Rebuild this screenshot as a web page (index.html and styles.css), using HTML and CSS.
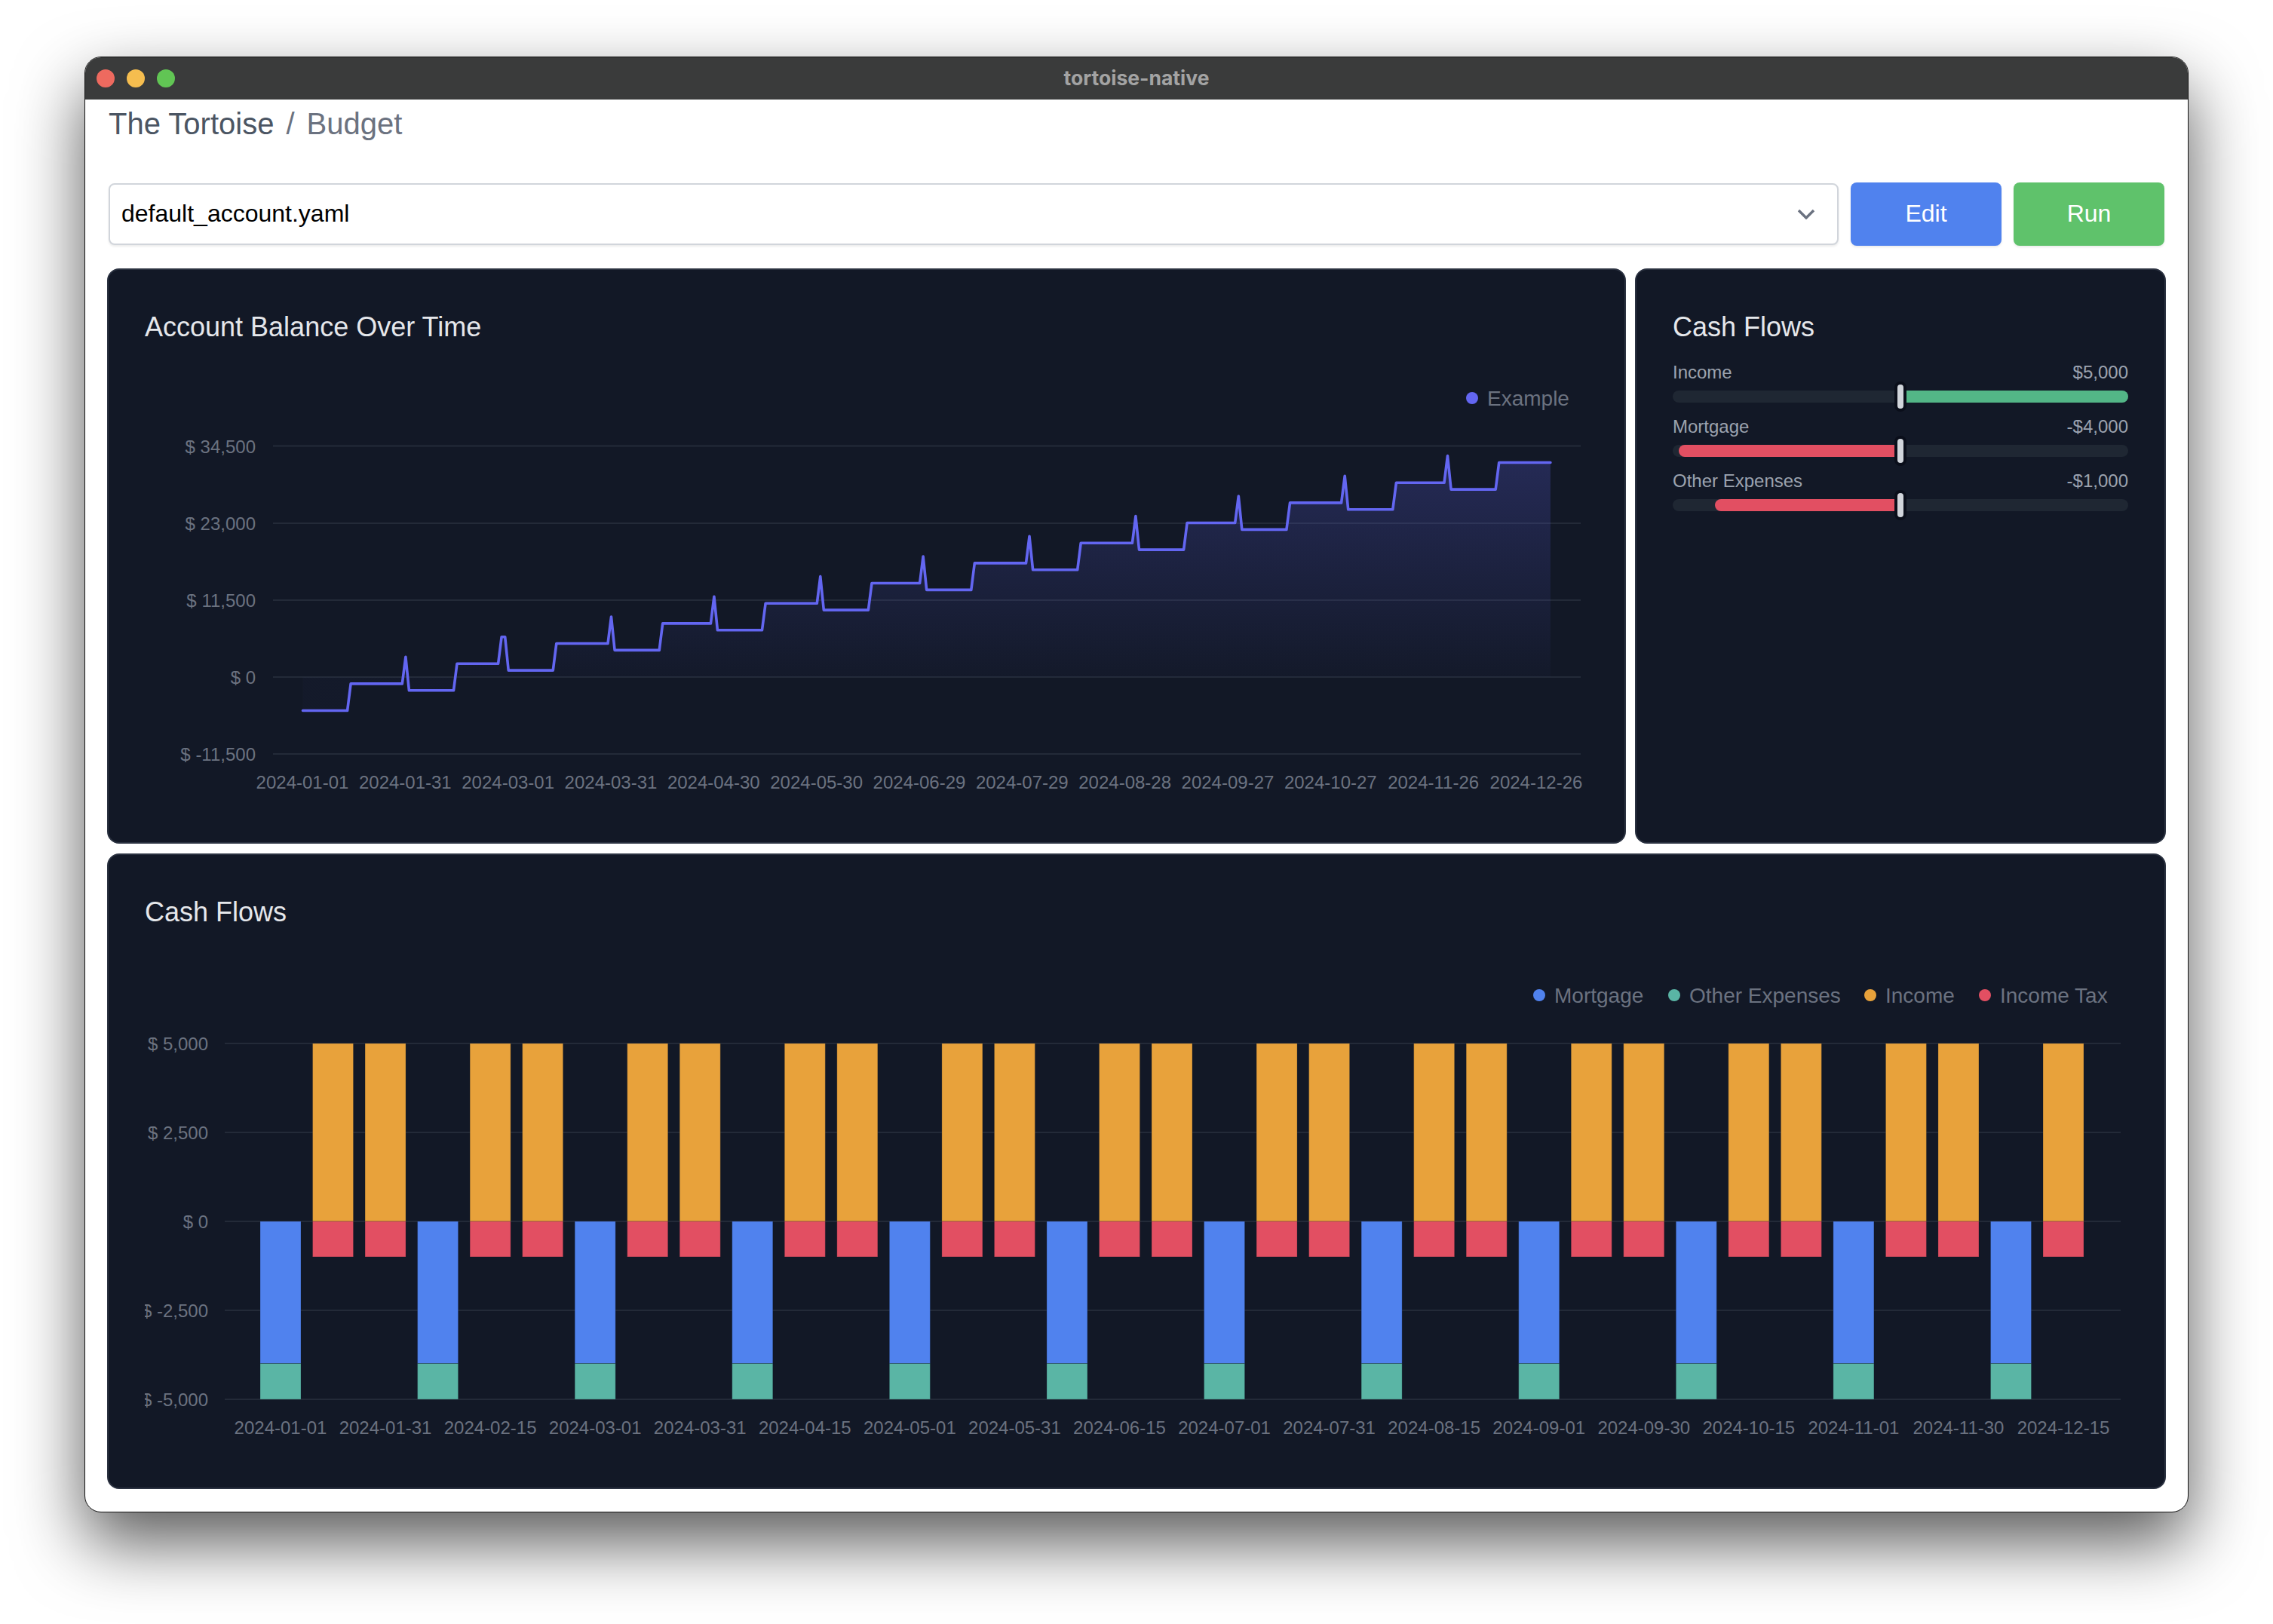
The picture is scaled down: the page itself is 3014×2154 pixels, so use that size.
FILE: index.html
```html
<!DOCTYPE html>
<html lang="en">

<head>
    <meta charset="UTF-8">
    <title>tortoise-native</title>
    <link rel="stylesheet" href="styles.css">
</head>

<body>
    <div class="window">
        <div class="titlebar">
            <div class="lights">
                <span class="light red"></span>
                <span class="light yellow"></span>
                <span class="light green"></span>
            </div>
            <div class="window-title">tortoise-native</div>
        </div>

        <main class="content">
            <nav class="breadcrumb">
                <span class="crumb-root">The Tortoise</span>
                <span class="crumb-sep">/</span>
                <span class="crumb-page">Budget</span>
            </nav>

            <div class="toolbar">
                <div class="select">
                    <span>default_account.yaml</span>
                    <svg class="chevron" viewBox="0 0 24 14" width="24" height="14">
                        <path d="M2 2 L12 12 L22 2" />
                    </svg>
                </div>
                <button class="btn btn-edit">Edit</button>
                <button class="btn btn-run">Run</button>
            </div>

            <div class="top-row">
                <section class="card">
                    <h2 class="card-title">Account Balance Over Time</h2>
                    <svg id="balanceChart" class="chart" viewBox="192 460 1914 609" width="1914" height="609"></svg>
                </section>

                <section class="card">
                    <h2 class="card-title">Cash Flows</h2>
                    <div class="flows">
                        <div class="flow">
                            <div class="flow-labels"><span>Income</span><span>$5,000</span></div>
                            <div class="track">
                                <div class="fill fill-pos" style="left: 51.3%; right: 0"></div>
                                <div class="handle"></div>
                            </div>
                        </div>
                        <div class="flow">
                            <div class="flow-labels"><span>Mortgage</span><span>-$4,000</span></div>
                            <div class="track">
                                <div class="fill fill-neg" style="left: 1.3%; right: 51.2%"></div>
                                <div class="handle"></div>
                            </div>
                        </div>
                        <div class="flow">
                            <div class="flow-labels"><span>Other Expenses</span><span>-$1,000</span></div>
                            <div class="track">
                                <div class="fill fill-neg" style="left: 9.3%; right: 51.2%"></div>
                                <div class="handle"></div>
                            </div>
                        </div>
                    </div>
                </section>
            </div>

            <section class="card card-wide">
                <h2 class="card-title">Cash Flows</h2>
                <svg id="flowsChart" class="chart" viewBox="192 1236 2630 689" width="2630" height="689"></svg>
            </section>
        </main>
    </div>

    <script src="script.js"></script>
</body>

</html>
```

FILE: styles.css
```css
* {
    box-sizing: border-box;
}

html,
body {
    margin: 0;
    height: 2154px;
    overflow: hidden;
}

body {
    font-family: 'Liberation Sans', Arial, sans-serif;
    background-color: #fff;
    padding: 75px 112px 0;
}

.window {
    width: 2790px;
    height: 1931px;
    background: #fff;
    border: 1px solid #111;
    border-radius: 22px;
    box-shadow: 0 40px 90px rgba(0, 0, 0, 0.65);
    overflow: hidden;
}

.titlebar {
    position: relative;
    height: 56px;
    padding-bottom: 2px;
    background-color: #3a3b3b;
    display: flex;
    align-items: center;
    justify-content: center;
}

.lights {
    position: absolute;
    left: 15px;
    top: 16px;
    display: flex;
    gap: 16px;
}

.light {
    width: 24px;
    height: 24px;
    border-radius: 50%;
}

.light.red {
    background-color: #ee6a5f;
}

.light.yellow {
    background-color: #f5bd4f;
}

.light.green {
    background-color: #61c554;
}

.window-title {
    font-family: Inter, sans-serif;
    font-weight: 700;
    font-size: 26.5px;
    color: #a3a3a3;
}

.content {
    padding: 1px 29px 30px;
}

.breadcrumb {
    margin: 0 2px;
    height: 60px;
    line-height: 62px;
    font-size: 40px;
    display: flex;
    gap: 16px;
    color: #6b7280;
}

.crumb-root {
    color: #4b5563;
}

.toolbar {
    margin: 49px 2px 30px;
    height: 84px;
    display: flex;
    gap: 16px;
    align-items: center;
}

.select {
    flex: 1;
    height: 82px;
    padding: 0 16px 2px 15px;
    background: #fff;
    border: 2px solid #d1d5db;
    border-radius: 8px;
    box-shadow: 0 2px 3px rgba(0, 0, 0, 0.08);
    font-size: 32px;
    color: #000;
    display: flex;
    align-items: center;
    justify-content: space-between;
}

.chevron {
    margin: 2px 13px 0 0;
}

.chevron path {
    fill: none;
    stroke: #6b7280;
    stroke-width: 3.4;
}

.btn {
    width: 200px;
    height: 84px;
    padding: 0 0 2px;
    border: none;
    border-radius: 8px;
    color: #fff;
    font-family: inherit;
    font-size: 32px;
    box-shadow: 0 2px 3px rgba(0, 0, 0, 0.08);
}

.btn-edit {
    background-color: #5082ee;
}

.btn-run {
    background-color: #5fc26b;
}

.top-row {
    display: grid;
    grid-template-columns: 1fr 704px;
    gap: 12px;
    height: 763px;
}

.card {
    background-color: #121826;
    border: 2px solid #2a3140;
    border-radius: 16px;
    padding: 48px;
    overflow: hidden;
}

.card-wide {
    margin-top: 13px;
    height: 843px;
}

.card-title {
    margin: 0;
    height: 54px;
    line-height: 56px;
    font-size: 36px;
    font-weight: 400;
    color: #e5e7eb;
}

.chart {
    display: block;
    font-size: 24px;
}

.chart text {
    fill: #6b7280;
}

.chart .legend {
    font-size: 28px;
}

.chart .grid {
    stroke: #232a38;
    stroke-width: 2;
}

.chart .balance-line {
    fill: none;
    stroke: #6366f1;
    stroke-width: 3.6;
    stroke-linejoin: round;
    stroke-linecap: round;
}

.chart .bar {
    stroke: #111827;
    stroke-opacity: 0.25;
    stroke-width: 1;
}

.flows {
    margin-top: 14px;
}

.flow {
    height: 72px;
}

.flow-labels {
    height: 40px;
    line-height: 40px;
    font-size: 24px;
    color: #9ca3af;
    display: flex;
    justify-content: space-between;
}

.track {
    position: relative;
    margin-top: 4px;
    height: 16px;
    border-radius: 8px;
    background-color: #1f2733;
}

.fill {
    position: absolute;
    top: 0;
    bottom: 0;
}

.fill-pos {
    background-color: #53b687;
    border-radius: 0 8px 8px 0;
}

.fill-neg {
    background-color: #e24f62;
    border-radius: 8px 0 0 8px;
}

.handle {
    position: absolute;
    left: 298px;
    top: -8px;
    width: 8px;
    height: 32px;
    border-radius: 4px;
    background-color: #d1d5db;
    box-shadow: 0 0 0 4px #0a0e1a;
}
```

FILE: script.js
```js
const NS = 'http://www.w3.org/2000/svg';

function add(svg, tag, attrs, text) {
    const el = document.createElementNS(NS, tag);
    for (const k in attrs) {
        el.setAttribute(k, attrs[k]);
    }
    if (text) {
        el.textContent = text;
    }
    svg.appendChild(el);
    return el;
}

function legend(svg, items, y) {
    items.forEach(item => {
        add(svg, 'circle', { cx: item.x, cy: y, r: 8, fill: item.color });
        add(svg, 'text', { x: item.x + 20, y: y, dy: '0.35em', class: 'legend' }, item.name);
    });
}

function drawBalance() {
    const svg = document.getElementById('balanceChart');
    const zero = 898;
    const yOf = v => zero - v * 0.00889;
    const xOf = day => 401.5 + 4.545 * day;

    const ticks = [
        ['$ 34,500', 591.5], ['$ 23,000', 694], ['$ 11,500', 796],
        ['$ 0', 898], ['$ -11,500', 1000]
    ];
    ticks.forEach(([label, y]) => {
        add(svg, 'line', { x1: 362, x2: 2096, y1: y, y2: y, class: 'grid' });
        add(svg, 'text', { x: 339, y: y + 1, dy: '0.35em', 'text-anchor': 'end' }, label);
    });

    const dates = ['01-01', '01-31', '03-01', '03-31', '04-30', '05-30', '06-29',
        '07-29', '08-28', '09-27', '10-27', '11-26', '12-26'];
    dates.forEach((d, i) => {
        add(svg, 'text', { x: 401 + 136.33 * i, y: 1038, dy: '0.35em', 'text-anchor': 'middle' }, '2024-' + d);
    });

    // mortgage on the 1st, pay on the 15th and on the last day of the month
    const starts = [0, 31, 60, 91, 121, 152, 182, 213, 244, 274, 305, 335];
    const events = {};
    starts.forEach((s, i) => {
        events[s] = -5000;
        events[s + 14] = 4000;
        if (i < 11) {
            events[i === 1 ? 58 : starts[i + 1] - 1] = 4000;
        }
    });

    const points = [];
    let balance = 0;
    for (let day = 0; day <= 364; day++) {
        balance += events[day] || 0;
        points.push(xOf(day).toFixed(1) + ',' + yOf(balance).toFixed(1));
    }

    const defs = add(svg, 'defs', {});
    const grad = add(defs, 'linearGradient', {
        id: 'balanceFill', gradientUnits: 'userSpaceOnUse', x1: 0, x2: 0, y1: 600, y2: zero
    });
    add(grad, 'stop', { offset: 0, 'stop-color': '#6366f1', 'stop-opacity': 0.24 });
    add(grad, 'stop', { offset: 1, 'stop-color': '#6366f1', 'stop-opacity': 0.02 });

    const area = points.join(' ') + ' ' + xOf(364).toFixed(1) + ',' + zero + ' ' + xOf(0) + ',' + zero;
    add(svg, 'polygon', { points: area, fill: 'url(#balanceFill)' });
    add(svg, 'polyline', { points: points.join(' '), class: 'balance-line' });

    legend(svg, [{ x: 1952, name: 'Example', color: '#6366f1' }], 528);
}

function drawFlows() {
    const svg = document.getElementById('flowsChart');
    const colors = { income: '#e8a23b', tax: '#e24f62', mortgage: '#5082ee', other: '#5ab5a5' };

    const ticks = [
        ['$ 5,000', 1384], ['$ 2,500', 1502], ['$ 0', 1620],
        ['$ -2,500', 1738], ['$ -5,000', 1856]
    ];
    ticks.forEach(([label, y]) => {
        add(svg, 'line', { x1: 298, x2: 2812, y1: y, y2: y, class: 'grid' });
        add(svg, 'text', { x: 276, y: y + 1, dy: '0.35em', 'text-anchor': 'end' }, label);
    });

    const bar = (i, y1, y2, color) => {
        const x = 345 + 69.53 * i;
        add(svg, 'rect', { x: x, y: y1, width: 54, height: y2 - y1, fill: color, class: 'bar' });
    };

    for (let i = 0; i < 35; i++) {
        if (i % 3 === 0) {
            bar(i, 1620, 1808.5, colors.mortgage);
            bar(i, 1808.5, 1856, colors.other);
        } else {
            bar(i, 1384, 1620, colors.income);
            bar(i, 1620, 1667, colors.tax);
        }
    }

    const dates = ['01-01', '01-31', '02-15', '03-01', '03-31', '04-15', '05-01', '05-31', '06-15',
        '07-01', '07-31', '08-15', '09-01', '09-30', '10-15', '11-01', '11-30', '12-15'];
    dates.forEach((d, i) => {
        add(svg, 'text', { x: 372 + 139.06 * i, y: 1894, dy: '0.35em', 'text-anchor': 'middle' }, '2024-' + d);
    });

    legend(svg, [
        { x: 2041, name: 'Mortgage', color: colors.mortgage },
        { x: 2220, name: 'Other Expenses', color: colors.other },
        { x: 2480, name: 'Income', color: colors.income },
        { x: 2632, name: 'Income Tax', color: colors.tax }
    ], 1320);
}

drawBalance();
drawFlows();
```
